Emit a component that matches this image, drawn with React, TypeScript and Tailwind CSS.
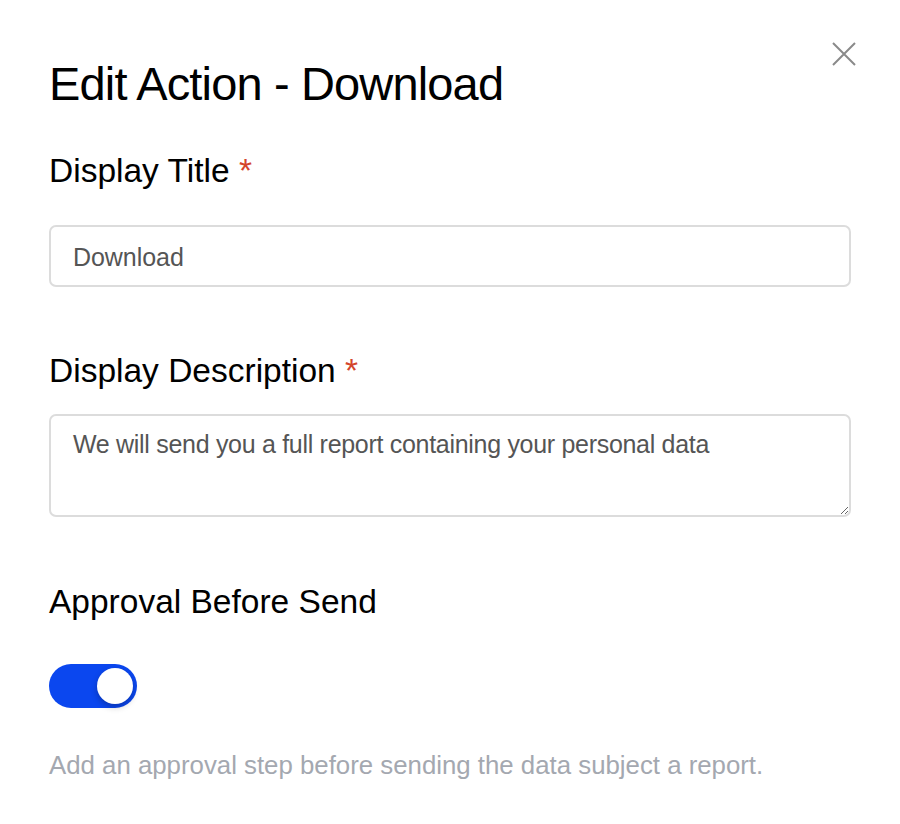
import React, { useState } from "react";

export default function App() {
  const [title, setTitle] = useState("Download");
  const [description, setDescription] = useState(
    "We will send you a full report containing your personal data",
  );
  const [approval, setApproval] = useState(true);

  return (
    <div className="min-h-screen bg-white font-['Liberation_Sans',Arial,sans-serif] text-black">
      <div className="relative px-[49px] pt-[56px] pb-10">
        {/* Close */}
        <button
          type="button"
          aria-label="Close"
          className="absolute right-[44px] top-[42px] text-[#8a8a8a]"
        >
          <svg width="24" height="24" viewBox="0 0 24 24" fill="none">
            <path d="M1 1L23 23M23 1L1 23" stroke="currentColor" strokeWidth="2" />
          </svg>
        </button>

        <h1 className="text-[47px] leading-[56px] tracking-[-0.85px] font-normal">
          Edit Action - Download
        </h1>

        {/* Display Title */}
        <label className="mt-[39px] block text-[33.5px] leading-[40px]">
          Display Title <span className="text-[#d4452c]">*</span>
        </label>
        <input
          value={title}
          onChange={(e) => setTitle(e.target.value)}
          className="mt-[34px] block h-[62px] w-full rounded-[7px] border-2 border-[#dcdcdc] pl-[22px] pt-[3px] text-[25px] tracking-[-0.05px] text-[#555555] outline-none"
        />

        {/* Display Description */}
        <label className="mt-[64px] block text-[33.5px] leading-[40px]">
          Display Description <span className="text-[#d4452c]">*</span>
        </label>
        <textarea
          value={description}
          onChange={(e) => setDescription(e.target.value)}
          className="mt-[23px] block h-[103px] w-full rounded-[7px] border-2 border-[#dcdcdc] px-[22px] pt-[12px] text-[25px] leading-[32px] tracking-[-0.3px] text-[#555555] outline-none"
        />

        {/* Approval */}
        <div className="mt-[65px] text-[33.5px] leading-[40px]">
          Approval Before Send
        </div>
        <button
          type="button"
          onClick={() => setApproval(!approval)}
          className={`mt-[42px] flex h-[44px] w-[88px] items-center rounded-full p-[4px] ${
            approval ? "justify-end bg-[#0b47ef]" : "justify-start bg-[#d1d5db]"
          }`}
        >
          <span className="block h-[36px] w-[36px] rounded-full bg-white shadow-[0_3px_6px_rgba(0,0,0,0.25)]" />
        </button>

        <p className="mt-[41px] text-[25.8px] leading-[32px] text-[#a4a8b0]">
          Add an approval step before sending the data subject a report.
        </p>
      </div>
    </div>
  );
}
